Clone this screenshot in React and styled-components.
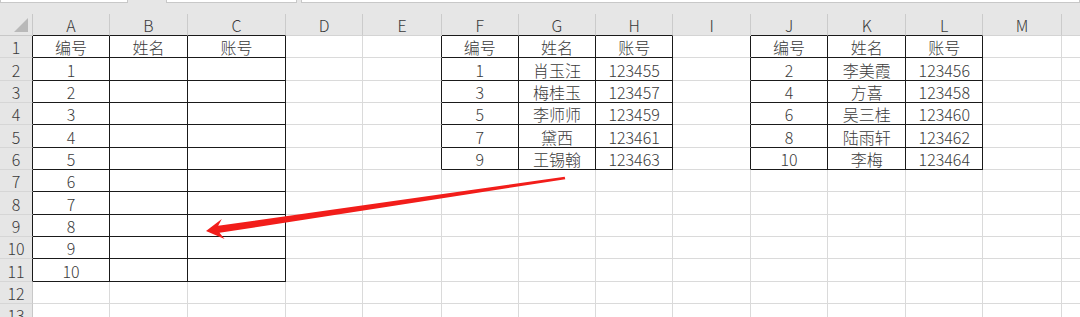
import React from "react";
import styled, { createGlobalStyle } from "styled-components";

const GlobalStyle = createGlobalStyle`
  html, body {
    margin: 0;
    padding: 0;
    background: #ffffff;
    overflow: hidden;
  }
  * {
    box-sizing: border-box;
  }
`;

const FONT = `"Noto Sans CJK SC", "Noto Sans", "Liberation Sans", sans-serif`;

// column widths (row header first), row heights (column header first)
const COLS = [33, 77, 78, 98, 77.3, 78.4, 77.3, 77, 77.3, 77.7, 77.3, 78, 77, 78.4, 40];
const LETTERS = ["", "A", "B", "C", "D", "E", "F", "G", "H", "I", "J", "K", "L", "M", ""];
const ROW_COUNT = 13;

// ranges that carry the black "all borders" frame
const tables = [
  { r0: 1, r1: 11, c0: 1, c1: 3 },
  { r0: 1, r1: 6, c0: 6, c1: 8 },
  { r0: 1, r1: 6, c0: 10, c1: 12 },
];

const inTable = (r, c) =>
  tables.some((t) => r >= t.r0 && r <= t.r1 && c >= t.c0 && c <= t.c1);

const values = {};
const put = (r, c, list) => list.forEach((v, i) => (values[`${r},${c + i}`] = v));

put(1, 1, ["编号", "姓名", "账号"]);
for (let i = 1; i <= 10; i++) put(i + 1, 1, [String(i)]);

put(1, 6, ["编号", "姓名", "账号"]);
put(2, 6, ["1", "肖玉汪", "123455"]);
put(3, 6, ["3", "梅桂玉", "123457"]);
put(4, 6, ["5", "李师师", "123459"]);
put(5, 6, ["7", "黛西", "123461"]);
put(6, 6, ["9", "王锡翰", "123463"]);

put(1, 10, ["编号", "姓名", "账号"]);
put(2, 10, ["2", "李美霞", "123456"]);
put(3, 10, ["4", "方喜", "123458"]);
put(4, 10, ["6", "吴三桂", "123460"]);
put(5, 10, ["8", "陆雨轩", "123462"]);
put(6, 10, ["10", "李梅", "123464"]);

function App() {
  const rows = [];
  for (let r = 1; r <= ROW_COUNT; r++) rows.push(r);

  return (
    <Sheet>
      <GlobalStyle />
      <TopBar>
        <InputBox $width={128} />
        <InputBox $width={131} $gap={38} />
        <InputBox $grow $gap={4} />
      </TopBar>

      <Grid $cols={COLS}>
        <Corner>
          <CornerTriangle />
        </Corner>
        {LETTERS.slice(1).map((l, i) => (
          <ColHead key={`h${i}`} $dark={inTable(1, i + 1)}>
            {l}
          </ColHead>
        ))}

        {rows.map((r) => (
          <React.Fragment key={r}>
            <RowHead $dark={inTable(r, 1)}>{r}</RowHead>
            {COLS.slice(1).map((_, i) => {
              const c = i + 1;
              return (
                <Cell
                  key={c}
                  $right={inTable(r, c) || inTable(r, c + 1)}
                  $bottom={inTable(r, c) || inTable(r + 1, c)}
                >
                  {values[`${r},${c}`]}
                </Cell>
              );
            })}
          </React.Fragment>
        ))}
      </Grid>

      {/* hand-drawn annotation arrow over the sheet */}
      <Arrow width="1080" height="317" viewBox="0 0 1080 317">
        <polygon
          fill="#f21d1a"
          points="206,231 224.6,239 219.5,232.8 565.3,179.2 564.7,176.7 218.2,225.8 221.8,218.9"
        />
      </Arrow>
    </Sheet>
  );
}

const Sheet = styled.div`
  position: relative;
  width: 1080px;
  height: 317px;
  overflow: hidden;
  background: #ffffff;
  font-family: ${FONT};
  font-weight: 300;
  color: #3a3a3a;
`;

const TopBar = styled.div`
  display: flex;
  height: 14px;
  background: #e6e6e6;
`;

const InputBox = styled.div`
  height: 3px;
  width: ${(p) => (p.$grow ? "auto" : `${p.$width}px`)};
  flex: ${(p) => (p.$grow ? 1 : "none")};
  margin-left: ${(p) => p.$gap || 0}px;
  background: #ffffff;
  border: 1px solid #c8c8c8;
  border-top: none;
`;

const Grid = styled.div`
  display: grid;
  grid-template-columns: ${(p) => p.$cols.map((w) => `${w}px`).join(" ")};
  grid-template-rows: 22px repeat(${ROW_COUNT}, 22.33px);
`;

const Corner = styled.div`
  position: relative;
  background: #e6e6e6;
  border-right: 1px solid #c8c8c8;
  border-bottom: 1px solid #c8c8c8;
`;

const CornerTriangle = styled.div`
  position: absolute;
  right: 4px;
  bottom: 3px;
  width: 0;
  height: 0;
  border-left: 14px solid transparent;
  border-bottom: 14px solid #b9b9b9;
`;

const ColHead = styled.div`
  display: flex;
  align-items: flex-end;
  justify-content: center;
  background: #e6e6e6;
  border-right: 1px solid #cbcbcb;
  border-bottom: 1px solid ${(p) => (p.$dark ? "#1a1a1a" : "#d4d4d4")};
  font-size: 16px;
  line-height: 20px;
`;

const RowHead = styled.div`
  display: flex;
  align-items: flex-end;
  justify-content: center;
  background: #e6e6e6;
  border-right: 1px solid ${(p) => (p.$dark ? "#1a1a1a" : "#c8c8c8")};
  border-bottom: 1px solid #d6d6d6;
  font-size: 16px;
  line-height: 20px;
`;

const Cell = styled.div`
  display: flex;
  align-items: flex-end;
  justify-content: center;
  border-right: 1px solid ${(p) => (p.$right ? "#1a1a1a" : "#dadada")};
  border-bottom: 1px solid ${(p) => (p.$bottom ? "#1a1a1a" : "#dadada")};
  font-size: 16px;
  line-height: 20px;
  white-space: nowrap;
  overflow: hidden;
`;

const Arrow = styled.svg`
  position: absolute;
  left: 0;
  top: 0;
  pointer-events: none;
`;

export default App;
